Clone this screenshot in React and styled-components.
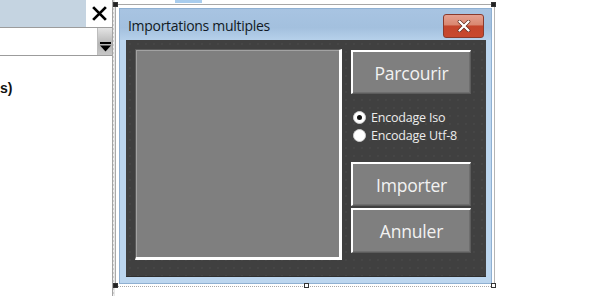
import React from 'react'
import styled, { createGlobalStyle } from 'styled-components'

const GlobalStyle = createGlobalStyle`
  html, body {
    margin: 0;
    padding: 0;
    background: #ffffff;
  }
  body {
    font-family: "Open Sans", "Noto Sans", "DejaVu Sans", sans-serif;
  }
`

const Page = styled.div`
  display: flex;
  width: 600px;
  height: 296px;
  overflow: hidden;
  background: #ffffff;
`

const LeftPane = styled.div`
  width: 112px;
  flex: none;
  display: flex;
  flex-direction: column;
  border-right: 1px solid #a3a3a3;
`

const PaneHeader = styled.div`
  height: 27px;
  display: flex;
  justify-content: flex-end;
  background: #c5d4e1;
`

const PaneClose = styled.div`
  width: 26px;
  background: #ffffff;
  display: flex;
  align-items: center;
  justify-content: center;
  svg {
    width: 17px;
    height: 17px;
  }
`

const Combo = styled.div`
  height: 27px;
  display: flex;
  justify-content: flex-end;
  border-top: 1px solid #9c9c9c;
  border-bottom: 1px solid #9c9c9c;
  background: #ffffff;
`

const DropButton = styled.div`
  width: 14px;
  display: flex;
  flex-direction: column;
  justify-content: flex-end;
  align-items: center;
  padding-bottom: 3px;
  background: linear-gradient(#e4e4e4, #b4b4b4 60%, #c8c8c8);
  border-left: 1px solid #bdbdbd;
  svg {
    width: 11px;
    height: 10px;
  }
`

const PaneBody = styled.div`
  padding: 24px 0 0 0;
  font-family: "Liberation Sans", Arial, sans-serif;
  font-weight: bold;
  font-size: 14px;
  color: #111111;
`

const Grip = styled.div`
  width: 1px;
  flex: none;
  background: repeating-linear-gradient(#cfcfcf 0 2px, #f0f0f0 2px 4px);
  border-right: 1px solid #e6e6e6;
`

const Canvas = styled.div`
  flex: 1;
  display: flex;
  flex-direction: column;
`

const TopStrip = styled.div`
  height: 3px;
  display: flex;
  padding-left: 60px;
`

const TabMark = styled.div`
  width: 27px;
  background: #a9cdee;
`

const Frame = styled.div`
  position: relative;
  width: 373px;
  height: 276px;
  margin-top: 1px;
  padding: 3px 2px 2px 3px;
  border: 1px solid #a8a8a8;
  border-right-color: #b5b5b5;
  border-bottom-style: dotted;
`

const Handle = styled.span`
  position: absolute;
  width: 3px;
  height: 3px;
  background: ${props => (props.$dark ? '#222' : '#fff')};
  border: 1px solid #333;
  left: ${props => props.$x};
  top: ${props => props.$y};
`

const Form = styled.div`
  height: 100%;
  display: flex;
  flex-direction: column;
  background: #bcd6ef;
  border: 1px solid #8fb0d2;
  box-sizing: border-box;
`

const TitleBar = styled.div`
  height: 31px;
  flex: none;
  display: flex;
  align-items: flex-start;
  justify-content: space-between;
  padding: 0 7px 0 8px;
  background: linear-gradient(#a8c4e2, #a3c0de 60%, #b6d0ea);
`

const Title = styled.span`
  margin-top: 7px;
  font-size: 14px;
  color: #111a24;
  letter-spacing: -0.3px;
`

const CloseBtn = styled.div`
  margin-top: 5px;
  width: 41px;
  height: 24px;
  box-sizing: border-box;
  border: 1px solid #8a3a2c;
  border-radius: 3px;
  background: linear-gradient(#e6a090 0%, #d98770 45%, #c4452c 50%, #c8492f 100%);
  display: flex;
  align-items: center;
  justify-content: center;
  svg {
    width: 14px;
    height: 12px;
  }
`

const Client = styled.div`
  flex: 1;
  margin: 0 5px 6px 6px;
  display: flex;
  gap: 9px;
  padding: 9px 0 0 9px;
  background-color: #404040;
  background-image: radial-gradient(circle, #484848 0.6px, transparent 1px);
  background-size: 8px 8px;
  border-bottom: 1px solid #2e2e2e;
`

const ListBox = styled.div`
  width: 203px;
  height: 207px;
  flex: none;
  background: #7f7f7f;
  border-top: 1px solid #5a5a5a;
  border-left: 1px solid #5a5a5a;
  border-right: 3px solid #ffffff;
  border-bottom: 3px solid #ffffff;
  box-shadow: inset 1px 1px 0 #a2a2a2;
`

const Side = styled.div`
  width: 120px;
  display: flex;
  flex-direction: column;
  padding-top: 1px;
`

const Button = styled.div`
  height: ${props => props.$h || 44}px;
  margin-top: ${props => props.$top || 0}px;
  box-sizing: border-box;
  display: flex;
  align-items: center;
  justify-content: center;
  background: #7f7f7f;
  border-top: 2px solid #ffffff;
  border-left: 2px solid #ffffff;
  border-right: 1px solid #5c5c5c;
  border-bottom: 1px solid #5c5c5c;
  box-shadow: inset -1px -1px 0 #6e6e6e;
  color: #f2f2f2;
  font-size: 17.5px;
  letter-spacing: -0.2px;
`

const Radios = styled.div`
  display: flex;
  flex-direction: column;
  margin-top: 14px;
  padding-left: 2px;
`

const RadioRow = styled.label`
  display: flex;
  align-items: center;
  gap: 5px;
  height: 18px;
  font-size: 12.5px;
  letter-spacing: -0.2px;
  color: #ececec;
`

const RadioDot = styled.span`
  width: 13px;
  height: 13px;
  border-radius: 50%;
  background: #ffffff;
  box-sizing: border-box;
  border: 1px solid #d0d0d0;
  display: flex;
  align-items: center;
  justify-content: center;
  &::after {
    content: '';
    display: ${props => (props.$checked ? 'block' : 'none')};
    width: 5px;
    height: 5px;
    border-radius: 50%;
    background: #111111;
  }
`

const Radio = ({ checked, children }) => (
  <RadioRow>
    <RadioDot $checked={checked} />
    <span>{children}</span>
  </RadioRow>
)

const App = () => (
  <>
    <GlobalStyle />
    <Page>
      <LeftPane>
        <PaneHeader>
          <PaneClose>
            <svg viewBox="0 0 16 16">
              <path d="M2 2 L14 14 M14 2 L2 14" stroke="#000" strokeWidth="2.6" />
            </svg>
          </PaneClose>
        </PaneHeader>
        <Combo>
          <DropButton>
            <svg viewBox="0 0 11 10">
              <rect x="0" y="0" width="11" height="2" fill="#000" />
              <path d="M0 3.5 H11 L5.5 9.5 Z" fill="#000" />
            </svg>
          </DropButton>
        </Combo>
        <PaneBody>s)</PaneBody>
      </LeftPane>
      <Grip />
      <Canvas>
        <TopStrip>
          <TabMark />
        </TopStrip>
        <Frame>
          <Handle $dark $x="-3px" $y="-3px" />
          <Handle $dark $x="375px" $y="-3px" />
          <Handle $dark $x="-3px" $y="278px" />
          <Handle $x="188px" $y="278px" />
          <Handle $x="375px" $y="278px" />
          <Form>
            <TitleBar>
              <Title>Importations multiples</Title>
              <CloseBtn>
                <svg viewBox="0 0 14 12">
                  <path d="M2.5 1.5 L11.5 10.5 M11.5 1.5 L2.5 10.5" stroke="#5a2418" strokeWidth="3.6" strokeLinecap="round" />
                  <path d="M2.5 1.5 L11.5 10.5 M11.5 1.5 L2.5 10.5" stroke="#ffffff" strokeWidth="2.4" strokeLinecap="round" />
                </svg>
              </CloseBtn>
            </TitleBar>
            <Client>
              <ListBox />
              <Side>
                <Button>Parcourir</Button>
                <Radios>
                  <Radio checked>Encodage Iso</Radio>
                  <Radio>Encodage Utf-8</Radio>
                </Radios>
                <Button $top={18}>Importer</Button>
                <Button $top={2} $h={45}>Annuler</Button>
              </Side>
            </Client>
          </Form>
        </Frame>
      </Canvas>
    </Page>
  </>
)

export default App
